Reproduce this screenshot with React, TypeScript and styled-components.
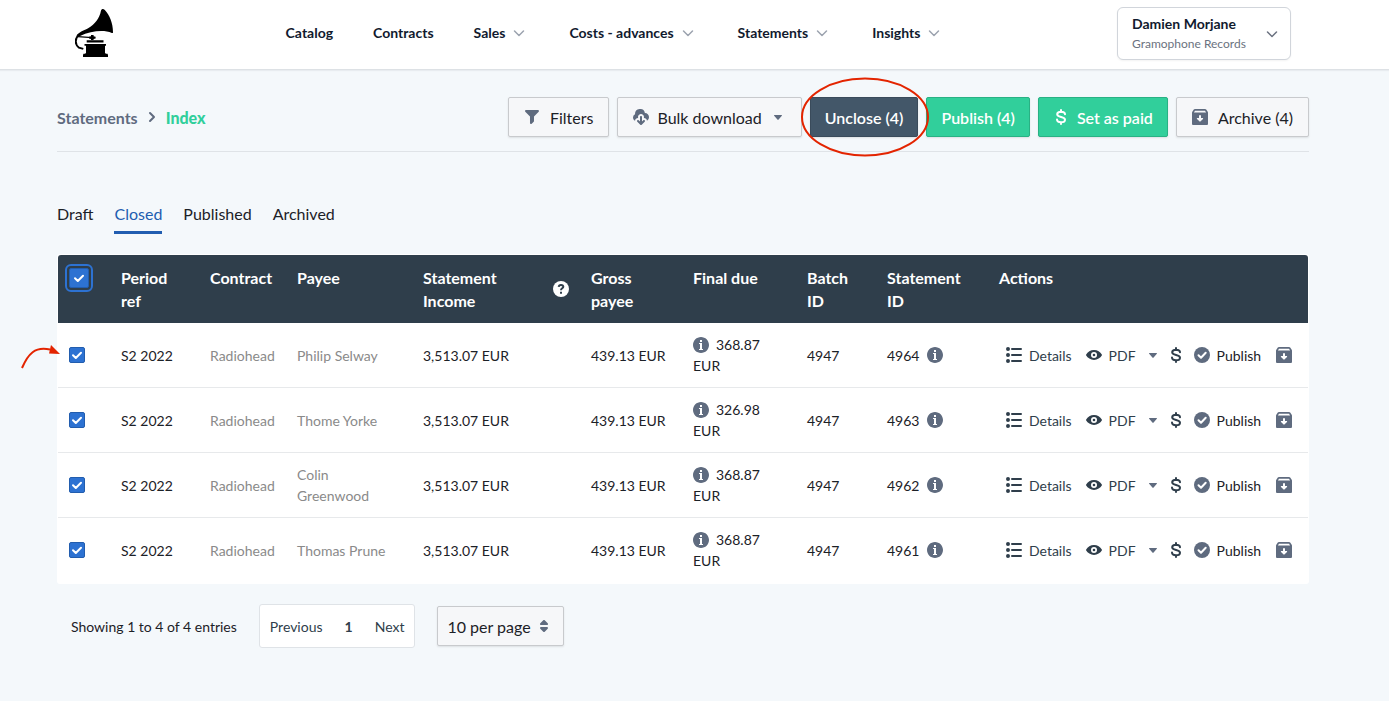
import React from "react";
import styled, { createGlobalStyle, css } from "styled-components";

const color = {
  page: "#f4f8fb",
  ink: "#1c2127",
  navy: "#111a2e",
  slate: "#2f3e4b",
  icon: "#5f6b7f",
  muted: "#8a8a8a",
  green: "#31cf9b",
  greenEdge: "#29b184",
  blue: "#2d72d2",
  link: "#215db0",
  line: "#dfe3e7",
  mark: "#e32400",
};

const GlobalStyle = createGlobalStyle`
  *, *::before, *::after { box-sizing: border-box; }
  body {
    margin: 0;
    background: ${color.page};
    color: ${color.ink};
    font-family: Lato, "Liberation Sans", sans-serif;
    font-size: 14px;
    line-height: 21px;
  }
  button, select, input { font: inherit; color: inherit; }
  a { color: inherit; text-decoration: none; }
`;

/* ---------- icons ---------- */

const Glyph = styled.svg`
  display: block;
  flex: none;
  width: 16px;
  height: 16px;
  fill: currentColor;
`;

type IconProps = { d: string };
const Icon = ({ d }: IconProps) => (
  <Glyph viewBox="0 0 16 16" aria-hidden="true">
    <path d={d} fillRule="evenodd" />
  </Glyph>
);

const paths = {
  filter:
    "M13.99.99h-12a1.003 1.003 0 00-.71 1.71l4.71 4.71V14a1.003 1.003 0 001.71.71l2-2c.18-.18.29-.43.29-.71V7.41L14.7 2.7a1.003 1.003 0 00-.71-1.71z",
  cloud:
    "M11 11c-.28 0-.53.11-.71.29L9 12.59V8c0-.55-.45-1-1-1s-1 .45-1 1v4.59L5.71 11.3A.965.965 0 005 11a1.003 1.003 0 00-.71 1.71l3 3c.18.18.43.29.71.29s.53-.11.71-.29l3-3A1.003 1.003 0 0011 11zm1-7c-.03 0-.07 0-.1.01A5 5 0 002 5c0 .11.01.22.02.33A3.51 3.51 0 000 8.5c0 1.41.84 2.61 2.03 3.17C2.2 10.17 3.46 9 5 9c.06 0 .13.02.19.02C5.07 8.7 5 8.36 5 8c0-1.66 1.34-3 3-3s3 1.34 3 3c0 .36-.07.7-.18 1.02.06 0 .12-.02.18-.02 1.54 0 2.8 1.17 2.97 2.67C15.19 11.07 16 9.63 16 8c0-2.21-1.79-4-4-4z",
  caret:
    "M12 6.5c0-.28-.22-.5-.5-.5h-7a.495.495 0 00-.37.83l3.5 4c.09.1.22.17.37.17s.28-.07.37-.17l3.5-4c.08-.09.13-.2.13-.33z",
  updown:
    "M5 7h6a1.003 1.003 0 00.71-1.71l-3-3C8.53 2.11 8.28 2 8 2s-.53.11-.71.29l-3 3A1.003 1.003 0 005 7zm6 2H5a1.003 1.003 0 00-.71 1.71l3 3c.18.18.43.29.71.29s.53-.11.71-.29l3-3A1.003 1.003 0 0011 9z",
  info: "M8 0C3.58 0 0 3.58 0 8s3.58 8 8 8 8-3.58 8-8-3.58-8-8-8zM7 3h2v2H7V3zm3 10H6v-1h1V7H6V6h3v6h1v1z",
  list: "M2 0a2 2 0 100 4 2 2 0 000-4zM2 6a2 2 0 100 4 2 2 0 000-4zM2 12a2 2 0 100 4 2 2 0 000-4zM6 3h9a1 1 0 000-2H6a1 1 0 000 2zM6 9h9a1 1 0 000-2H6a1 1 0 000 2zM6 15h9a1 1 0 000-2H6a1 1 0 000 2z",
  eye: "M8 3C4.600 3 1.600 5 .2 7.400a1.200 1.200 0 000 1.200C1.600 11 4.600 13 8 13s6.400-2 7.800-4.400a1.200 1.200 0 000-1.200C14.400 5 11.400 3 8 3zM8 11a3 3 0 110-6 3 3 0 010 6zM8 6.700a1.300 1.300 0 100 2.600 1.300 1.300 0 000-2.600z",
  archive:
    "M3 0h10c.5 0 .9.200 1.200.600l1.500 2.200c.2.300.3.700.3 1.100V15a1 1 0 01-1 1H1a1 1 0 01-1-1V3.900c0-.400.1-.800.3-1.100L1.800.600C2.100.200 2.500 0 3 0zM3 1.800L1.900 3.600h12.200L13 1.800zM7 6.300V9H5.400c-.5 0-.7.600-.4.900l2.600 2.600c.2.200.6.200.8 0L11 9.900c.3-.300.1-.900-.4-.900H9V6.300z",
};

const DollarIcon = () => (
  <Glyph viewBox="0 0 16 16" aria-hidden="true">
    <path
      d="M12 5.300C12 3.600 10.300 2.700 8 2.700S4.200 3.700 4.200 5.200C4.200 8.900 12 7 12 10.700c0 1.600-1.700 2.600-4 2.600s-4-1-4-2.700M8 1v2M8 13.300V15"
      fill="none"
      stroke="currentColor"
      strokeWidth="2"
      strokeLinecap="round"
    />
  </Glyph>
);

const TickCircleIcon = () => (
  <Glyph viewBox="0 0 16 16" aria-hidden="true">
    <circle cx="8" cy="8" r="8" />
    <path d="M4.500 8.300L7 10.700l4.700-4.900" fill="none" stroke="#fff" strokeWidth="2" strokeLinecap="round" strokeLinejoin="round" />
  </Glyph>
);

const HelpIcon = () => (
  <Glyph viewBox="0 0 16 16" role="img" aria-label="Help">
    <circle cx="8" cy="8" r="8" />
    <path d="M5.700 5.900C5.800 4.500 6.800 3.900 8 3.900s2.300.7 2.300 1.900C10.300 7.300 8 7.300 8 9.200" fill="none" stroke={color.slate} strokeWidth="2" />
    <path d="M7 10.700h2v2H7z" fill={color.slate} />
  </Glyph>
);

const Chevron = styled.svg`
  display: block;
  flex: none;
  width: 20px;
  height: 20px;
  fill: none;
  stroke: currentColor;
  stroke-width: 1.5;
  stroke-linecap: round;
  stroke-linejoin: round;
`;

const ChevronDown = () => (
  <Chevron viewBox="0 0 20 20" aria-hidden="true">
    <path d="M5.500 8l4.500 4.500L14.500 8" />
  </Chevron>
);

/* ---------- top bar ---------- */

const TopBar = styled.header`
  display: flex;
  align-items: center;
  justify-content: space-between;
  min-height: 70px;
  padding: 0 98px 2px 75px;
  background: #fff;
  border-bottom: 1px solid #dde1e5;
  box-shadow: 0 1px 1px rgba(16, 24, 40, 0.05);
`;

const HomeLink = styled.a`
  display: block;
  flex: none;
  padding-bottom: 2px;
`;

const LogoArt = styled.svg`
  display: block;
  width: 38px;
  height: 48px;
`;

const Logo = () => (
  <LogoArt viewBox="0 0 38 48" role="img" aria-label="Gramophone">
    <path d="M27 .2C28-.2 29 .2 29.800 1 34.500 6 38 14 38 23.200c0 1-.6 1-1.200.7C29 20.800 17 21.500 4.500 27.200L1.500 26.400C4 23 9 21.500 13.500 19 20 15 24.500 9.500 26 1.500 26.200.8 26.500.4 27 .2z" />
    <path d="M4 25.800C-.5 29.500-.2 35.500 4 38.700l4.300 1.200" fill="none" stroke="#000" strokeWidth="2" />
    <path d="M3 27.600L17 28.600" fill="none" stroke="#000" strokeWidth="1.300" />
    <path d="M16 26h2.600v1.200l2 .6v1.600l-2 .6V31H16v-1l-2-.6v-1.600l2-.6z" />
    <path d="M11.700 31.300h16.800v2.200H11.700zM9.500 35h21.500v1.700h-1V44l1 .7h1.500l.5 1.300v2H8v-2l.5-1.300H10l1-.7v-7.300H9.500z" />
  </LogoArt>
);

const MainNav = styled.nav`
  display: flex;
  align-items: center;
  gap: 40px;
  padding-bottom: 2px;
`;

const navItem = css`
  display: flex;
  align-items: center;
  gap: 4px;
  padding: 0;
  border: 0;
  background: none;
  color: ${color.navy};
  font-size: 14px;
  font-weight: 700;
  line-height: 20px;
  white-space: nowrap;
  cursor: pointer;
  ${Chevron} { color: #9ca3af; }
`;
const NavLink = styled.a`${navItem}`;
const NavMenu = styled.button`${navItem}`;

const AccountMenu = styled.button`
  display: flex;
  align-items: center;
  justify-content: space-between;
  width: 174px;
  padding: 6px 8px 6px 14px;
  border: 1px solid #d1d5db;
  border-radius: 6px;
  background: #fff;
  text-align: left;
  box-shadow: 0 1px 2px rgba(0, 0, 0, 0.05);
  cursor: pointer;
  ${Chevron} { color: #6b7280; }
`;

const Account = styled.span`
  display: grid;
`;
const AccountName = styled.span`
  color: ${color.navy};
  font-weight: 700;
  line-height: 20px;
`;
const AccountLabel = styled.span`
  color: #6b7280;
  font-size: 12px;
  line-height: 19px;
`;

/* ---------- page head ---------- */

const Page = styled.main`
  padding: 27px 80px 53px 57px;
`;

const PageHead = styled.div`
  display: flex;
  align-items: center;
  justify-content: space-between;
  padding-bottom: 14px;
  border-bottom: 1px solid ${color.line};
`;

const Breadcrumb = styled.nav`
  display: flex;
  align-items: center;
  gap: 9px;
  color: ${color.icon};
  font-size: 16px;
  font-weight: 700;
  strong { color: ${color.green}; }
`;

const CrumbArrow = styled.svg`
  width: 10px;
  height: 12px;
  fill: none;
  stroke: currentColor;
  stroke-width: 2;
  stroke-linecap: round;
  stroke-linejoin: round;
`;

const Toolbar = styled.div`
  display: flex;
  gap: 8px;
`;

type Tone = "plain" | "green" | "dark";
const tones = {
  plain: css`
    padding: 0 15px;
    background: #f6f7f9;
    border-color: #c8cacd;
    color: ${color.ink};
    ${Glyph} { color: ${color.icon}; }
  `,
  green: css`
    background: ${color.green};
    border-color: ${color.greenEdge};
    color: #fff;
  `,
  dark: css`
    background: #435769;
    border-color: #3a4b5b;
    color: #fff;
  `,
};

const ToolButton = styled.button<{ $tone: Tone; $tight?: boolean }>`
  display: flex;
  align-items: center;
  gap: ${(p) => (p.$tight ? 8 : 10)}px;
  height: 40px;
  padding: 0 14px;
  border: 1px solid;
  border-radius: 2px;
  font-size: 16px;
  font-weight: ${(p) => (p.$tone === "plain" ? 400 : 600)};
  white-space: nowrap;
  box-shadow: 0 1px 2px rgba(17, 20, 24, 0.1);
  cursor: pointer;
  ${(p) => tones[p.$tone]}
`;

const Marked = styled.div`
  position: relative;
`;

const EllipseMark = styled.svg`
  position: absolute;
  z-index: 1;
  top: -20px;
  left: -10px;
  width: 130px;
  height: 80px;
  fill: none;
  stroke: ${color.mark};
  stroke-width: 2;
  pointer-events: none;
`;

/* ---------- tabs ---------- */

const Tabs = styled.nav`
  display: flex;
  gap: 21px;
  margin: 44px 0 20px;
`;

const Tab = styled.a<{ $active?: boolean }>`
  padding: 3px 0 2px;
  border-bottom: 3px solid ${(p) => (p.$active ? color.link : "transparent")};
  color: ${(p) => (p.$active ? color.link : color.ink)};
  font-size: 16px;
  line-height: 30px;
`;

/* ---------- table ---------- */

const Card = styled.div`
  padding: 1px;
  background: #fff;
  border-radius: 3px;
`;

const DataTable = styled.table`
  width: 100%;
  table-layout: fixed;
  border-spacing: 0;
  th, td { padding: 11px 10px; text-align: left; }
  th {
    background: ${color.slate};
    color: #fff;
    font-size: 16px;
    font-weight: 700;
    line-height: 23px;
    vertical-align: top;
  }
  th:first-child { border-top-left-radius: 3px; }
  th:last-child { border-top-right-radius: 3px; }
  td { border-bottom: 1px solid #e7e9eb; vertical-align: middle; }
  tr:last-child td { border-bottom-color: transparent; }
`;

const Col = styled.col<{ $w?: number }>`
  width: ${(p) => (p.$w ? `${p.$w}px` : "auto")};
`;

const Narrow = styled.span`
  display: block;
  width: min-content;
`;

const HeadWithHelp = styled.span`
  display: flex;
  align-items: center;
  justify-content: space-between;
  padding-right: 2px;
`;

const CheckLabel = styled.label<{ $size: number }>`
  display: grid;
  place-items: center;
  position: relative;
  width: ${(p) => p.$size}px;
  height: ${(p) => p.$size}px;
  margin-left: 1px;
  > * { grid-area: 1 / 1; }
  th & { margin-top: 2px; }
  ${Glyph} { color: #fff; pointer-events: none; }
`;

const CheckInput = styled.input<{ $ring?: boolean }>`
  appearance: none;
  width: 100%;
  height: 100%;
  margin: 0;
  border: 1px solid #225dae;
  border-radius: 2px;
  background: ${color.blue};
  outline: ${(p) => (p.$ring ? `2px solid ${color.blue}` : "none")};
  outline-offset: 2px;
`;

const Check = ({ label, size = 16, ring }: { label: string; size?: number; ring?: boolean }) => (
  <CheckLabel $size={size}>
    <CheckInput type="checkbox" defaultChecked aria-label={label} $ring={ring} />
    <Glyph viewBox="0 0 16 16" aria-hidden="true">
      <path d="M4 8.200L6.800 11l5.200-5.300" fill="none" stroke="currentColor" strokeWidth="2" strokeLinecap="round" strokeLinejoin="round" />
    </Glyph>
  </CheckLabel>
);

const Quiet = styled.a`
  color: ${color.muted};
`;

const InlineInfo = styled.span`
  display: inline-block;
  height: 16px;
  margin-right: 7px;
  color: ${color.icon};
  vertical-align: -3px;
`;

const IdCell = styled.span`
  display: flex;
  align-items: center;
  gap: 8px;
  ${Glyph} { color: ${color.icon}; }
`;

const Actions = styled.div`
  display: flex;
  align-items: center;
  padding-left: 7px;
`;

const Action = styled.button<{ $after: number; $soft?: boolean }>`
  display: flex;
  align-items: center;
  gap: 7px;
  margin: 0 ${(p) => p.$after}px 0 0;
  padding: 0;
  border: 0;
  background: none;
  color: ${(p) => (p.$soft ? color.ink : color.slate)};
  cursor: pointer;
  ${Glyph} { color: ${(p) => (p.$soft ? color.icon : color.slate)}; }
`;

const RowMark = styled.svg`
  position: absolute;
  top: -4px;
  left: -50px;
  width: 44px;
  height: 30px;
  pointer-events: none;
`;

const MarkedCheck = styled.div`
  position: relative;
`;

/* ---------- footer ---------- */

const TableFoot = styled.div`
  display: flex;
  align-items: center;
  gap: 22px;
  padding: 20px 0 0 14px;
`;

const Pager = styled.nav`
  display: flex;
  align-items: center;
  height: 44px;
  padding: 0 10px;
  gap: 22px;
  background: #fff;
  border: 1px solid ${color.line};
  border-radius: 3px;
`;

const PageButton = styled.button<{ $current?: boolean }>`
  padding: 0;
  border: 0;
  background: none;
  color: ${color.slate};
  font-weight: ${(p) => (p.$current ? 700 : 400)};
  cursor: pointer;
`;

const PageSize = styled.label`
  display: grid;
  align-items: center;
  width: 127px;
  > * { grid-area: 1 / 1; }
  ${Glyph} {
    justify-self: end;
    margin-right: 12px;
    color: ${color.icon};
    pointer-events: none;
  }
`;

const PageSelect = styled.select`
  appearance: none;
  width: 100%;
  height: 40px;
  padding: 0 28px 0 9px;
  border: 1px solid #c8cacd;
  border-radius: 2px;
  background: #f6f7f9;
  box-shadow: 0 1px 2px rgba(17, 20, 24, 0.1);
  font-size: 16px;
`;

/* ---------- data ---------- */

const navItems = [
  { label: "Catalog" },
  { label: "Contracts" },
  { label: "Sales", menu: true },
  { label: "Costs - advances", menu: true },
  { label: "Statements", menu: true },
  { label: "Insights", menu: true },
];

const rows = [
  { payee: "Philip Selway", due: "368.87", id: 4964 },
  { payee: "Thome Yorke", due: "326.98", id: 4963 },
  { payee: "Colin Greenwood", due: "368.87", id: 4962 },
  { payee: "Thomas Prune", due: "368.87", id: 4961 },
];

const columnWidths = [53, 89, 87, 126, 168, 102, 114, 80, 112];

export default function App() {
  return (
    <>
      <GlobalStyle />
      <TopBar>
        <HomeLink href="#home">
          <Logo />
        </HomeLink>
        <MainNav aria-label="Main">
          {navItems.map((item) =>
            item.menu ? (
              <NavMenu key={item.label} type="button">
                {item.label}
                <ChevronDown />
              </NavMenu>
            ) : (
              <NavLink key={item.label} href="#nav">
                {item.label}
              </NavLink>
            )
          )}
        </MainNav>
        <AccountMenu type="button">
          <Account>
            <AccountName>Damien Morjane</AccountName>
            <AccountLabel>Gramophone Records</AccountLabel>
          </Account>
          <ChevronDown />
        </AccountMenu>
      </TopBar>

      <Page>
        <PageHead>
          <Breadcrumb aria-label="Breadcrumb">
            <a href="#statements">Statements</a>
            <CrumbArrow viewBox="0 0 10 12" aria-hidden="true">
              <path d="M3 2l4 4-4 4" />
            </CrumbArrow>
            <strong>Index</strong>
          </Breadcrumb>
          <Toolbar>
            <ToolButton type="button" $tone="plain">
              <Icon d={paths.filter} />
              Filters
            </ToolButton>
            <ToolButton type="button" $tone="plain" $tight>
              <Icon d={paths.cloud} />
              Bulk download
              <Icon d={paths.caret} />
            </ToolButton>
            <Marked>
              <ToolButton type="button" $tone="dark">
                Unclose (4)
              </ToolButton>
              <EllipseMark viewBox="0 0 130 80" aria-hidden="true">
                <ellipse cx="65" cy="40" rx="63" ry="38.500" />
              </EllipseMark>
            </Marked>
            <ToolButton type="button" $tone="green">
              Publish (4)
            </ToolButton>
            <ToolButton type="button" $tone="green" $tight>
              <DollarIcon />
              Set as paid
            </ToolButton>
            <ToolButton type="button" $tone="plain">
              <Icon d={paths.archive} />
              Archive (4)
            </ToolButton>
          </Toolbar>
        </PageHead>

        <Tabs aria-label="Statement status">
          <Tab href="#draft">Draft</Tab>
          <Tab href="#closed" $active aria-current="page">
            Closed
          </Tab>
          <Tab href="#published">Published</Tab>
          <Tab href="#archived">Archived</Tab>
        </Tabs>

        <Card>
          <DataTable>
            <colgroup>
              {columnWidths.map((w, i) => (
                <Col key={i} $w={w} />
              ))}
              <Col />
            </colgroup>
            <thead>
              <tr>
                <th scope="col">
                  <Check label="Select all statements" size={20} ring />
                </th>
                <th scope="col">
                  <Narrow>Period ref</Narrow>
                </th>
                <th scope="col">Contract</th>
                <th scope="col">Payee</th>
                <th scope="col">
                  <HeadWithHelp>
                    <Narrow>Statement Income</Narrow>
                    <HelpIcon />
                  </HeadWithHelp>
                </th>
                <th scope="col">
                  <Narrow>Gross payee</Narrow>
                </th>
                <th scope="col">Final due</th>
                <th scope="col">
                  <Narrow>Batch ID</Narrow>
                </th>
                <th scope="col">
                  <Narrow>Statement ID</Narrow>
                </th>
                <th scope="col">Actions</th>
              </tr>
            </thead>
            <tbody>
              {rows.map((row, i) => (
                <tr key={row.id}>
                  <td>
                    <MarkedCheck>
                      <Check label={`Select statement ${row.id}`} />
                      {i === 0 && (
                        <RowMark viewBox="0 0 44 30" aria-hidden="true">
                          <path d="M4 25C10 11 17 3 32 6.500" fill="none" stroke={color.mark} strokeWidth="2" />
                          <path d="M33 2l9 9-11-.5z" fill={color.mark} />
                        </RowMark>
                      )}
                    </MarkedCheck>
                  </td>
                  <td>S2 2022</td>
                  <td>
                    <Quiet href="#contract">Radiohead</Quiet>
                  </td>
                  <td>
                    <Quiet href="#payee">{row.payee}</Quiet>
                  </td>
                  <td>3,513.07 EUR</td>
                  <td>439.13 EUR</td>
                  <td>
                    <InlineInfo>
                      <Icon d={paths.info} />
                    </InlineInfo>
                    {row.due} EUR
                  </td>
                  <td>4947</td>
                  <td>
                    <IdCell>
                      {row.id}
                      <Icon d={paths.info} />
                    </IdCell>
                  </td>
                  <td>
                    <Actions>
                      <Action type="button" $after={14}>
                        <Icon d={paths.list} />
                        Details
                      </Action>
                      <Action type="button" $after={9}>
                        <Icon d={paths.eye} />
                        PDF
                      </Action>
                      <Action type="button" $after={7} $soft aria-label="More PDF options">
                        <Icon d={paths.caret} />
                      </Action>
                      <Action type="button" $after={10} aria-label="Set as paid">
                        <DollarIcon />
                      </Action>
                      <Action type="button" $after={15} $soft>
                        <TickCircleIcon />
                        Publish
                      </Action>
                      <Action type="button" $after={0} $soft aria-label="Archive">
                        <Icon d={paths.archive} />
                      </Action>
                    </Actions>
                  </td>
                </tr>
              ))}
            </tbody>
          </DataTable>
        </Card>

        <TableFoot>
          <span>Showing 1 to 4 of 4 entries</span>
          <Pager aria-label="Pagination">
            <PageButton type="button">Previous</PageButton>
            <PageButton type="button" $current aria-current="page">
              1
            </PageButton>
            <PageButton type="button">Next</PageButton>
          </Pager>
          <PageSize>
            <PageSelect aria-label="Entries per page" defaultValue="10">
              <option value="10">10 per page</option>
              <option value="25">25 per page</option>
              <option value="50">50 per page</option>
            </PageSelect>
            <Icon d={paths.updown} />
          </PageSize>
        </TableFoot>
      </Page>
    </>
  );
}
